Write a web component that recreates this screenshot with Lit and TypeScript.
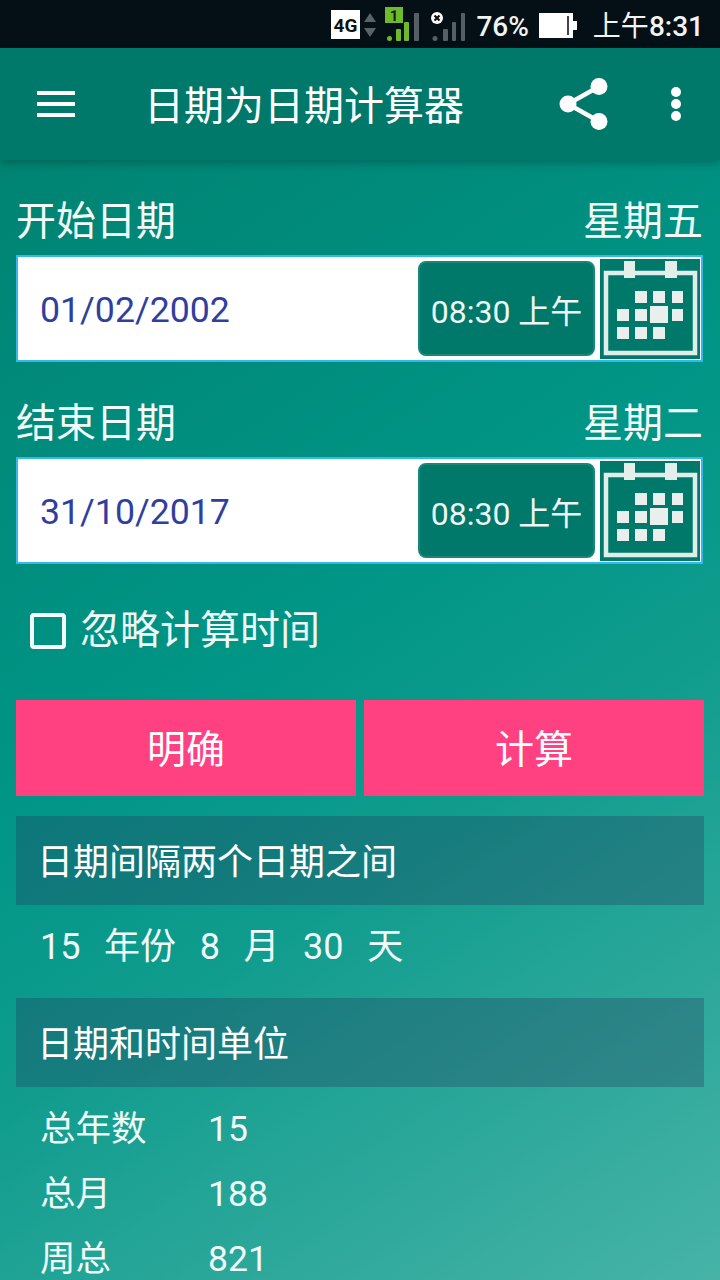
import { LitElement, html, css, svg } from "lit";
import { customElement } from "lit/decorators.js";

const calendar = svg`<svg class="cal" viewBox="0 0 100 100" width="100" height="100">
  <rect width="100" height="100" fill="#00796b"/>
  <rect x="6" y="14" width="89" height="80" fill="none" stroke="#dfeeea" stroke-width="4.5"/>
  <rect x="24" y="2" width="11" height="17" fill="#e4efec"/>
  <rect x="65" y="2" width="12" height="17" fill="#e4efec"/>
  <g fill="#e8efed">
    <rect x="35" y="32" width="12" height="12"/><rect x="53" y="32" width="12" height="12"/><rect x="72" y="32" width="11" height="12"/>
    <rect x="17" y="50" width="12" height="12"/><rect x="35" y="50" width="12" height="12"/><rect x="50" y="47" width="18" height="17"/><rect x="72" y="50" width="11" height="12"/>
    <rect x="17" y="68" width="12" height="12"/><rect x="35" y="68" width="12" height="12"/><rect x="53" y="68" width="12" height="12"/>
  </g>
</svg>`;

@customElement("app-root")
export class AppRoot extends LitElement {
  static styles = css`
    :host {
      display: block; width: 720px; height: 1280px; overflow: hidden; color: #fff;
      font-family: Roboto, "Noto Sans CJK SC", sans-serif;
    }
    .status {
      height: 48px; background: #040f16; display: flex; align-items: center;
      justify-content: flex-end; padding: 5px 16px 0 0; box-sizing: border-box; color: #f2f4f4;
    }
    .status svg { display: block; }
    .lte { margin: -4px 6px 0 0; }
    .sim1 { margin: -5px 12px 0 0; }
    .sim2 { margin: -5px 11px 0 0; }
    .pct { font-size: 28px; font-weight: 500; margin-right: 10px; line-height: 43px; }
    .batt { margin: -2px 16px 0 0; }
    .clock { font-size: 28px; font-weight: 500; line-height: 43px; }
    .clock .cjk { font-weight: 400; }
    .main {
      height: 1232px;
      background: linear-gradient(147deg, #00806f 0%, #009586 45%, #0f9c8d 62%, #47b3a7 100%);
    }
    .bar {
      height: 112px; background: #00796b; display: flex; align-items: center;
      box-shadow: 0 3px 8px rgba(0,50,40,.35); position: relative; box-sizing: border-box;
    }
    .menu { margin-left: 37px; margin-right: 69px; }
    .title { font-size: 40px; flex: 1; line-height: 104px; padding-top: 6px; }
    .share { margin-right: 61px; }
    .more { margin-right: 38px; }
    .content { padding: 38px 16px 0; }
    .label-row {
      display: flex; justify-content: space-between; width: 687px;
      font-size: 40px; line-height: 48px; height: 48px; color: #f2fbf9;
    }
    .label-row.second { margin-top: 38px; }
    .field {
      margin-top: 9px; width: 687px; height: 107px; box-sizing: border-box; background: #fff;
      border: 2px solid #35b8ec; display: flex; align-items: center; position: relative;
    }
    .date { color: #303f9f; font-size: 35.7px; margin-left: 22px; flex: 1; padding-top: 3px; }
    .time {
      width: 177px; height: 95px; box-sizing: border-box; background: #00796b;
      border: 2px solid #1a8678; border-radius: 8px; color: #eef7f5; font-size: 32px;
      display: flex; align-items: center; justify-content: center; margin-right: 5px; padding-top: 1px;
    }
    .cal { display: block; margin-right: 1px; }
    .check { display: flex; align-items: center; margin-top: 43px; padding-left: 14px; height: 48px; }
    .box { width: 36px; height: 36px; box-sizing: border-box; border: 4px solid #f4fbfa; border-radius: 4px; margin-right: 14px; }
    .check span { font-size: 40px; color: #eef8f6; line-height: 48px; }
    .buttons { display: flex; gap: 8px; margin-top: 45px; width: 688px; }
    .btn {
      flex: 1; height: 96px; box-sizing: border-box; padding-bottom: 4px; background: #ff4081;
      display: flex; align-items: center; justify-content: center; font-size: 39px;
    }
    .head {
      width: 688px; height: 89px; background: rgba(40, 50, 90, .3); display: flex; align-items: center;
      box-sizing: border-box; padding: 0 21px 4px; font-size: 36px;
    }
    .head.one { margin-top: 20px; }
    .result {
      height: 93px; display: flex; align-items: baseline; padding: 20px 0 0 24px; font-size: 36px;
      line-height: 45px; color: #f0faf8; box-sizing: border-box;
    }
    .result span { margin-right: 23.6px; white-space: nowrap; }
    .row {
      height: 65px; box-sizing: border-box; display: flex; align-items: baseline; padding: 20px 0 0 24px;
      font-size: 35.5px; line-height: 45px; color: #f0faf8;
    }
    .row .k { width: 168px; }
  `;

  private date(d: string) {
    return html`<div class="field">
      <div class="date">${d}</div>
      <div class="time">08:30 上午</div>
      ${calendar}
    </div>`;
  }

  render() {
    return html`
      <div class="status">
        <svg class="lte" width="48" height="29" viewBox="0 0 48 29">
          <rect x="0" y="0" width="29" height="29" fill="#fff"/>
          <text x="14.5" y="22" text-anchor="middle" font-family="Roboto" font-weight="700" font-size="19" fill="#111">4G</text>
          <path d="M39 3l6 9H33zM39 27l-6-9h12z" fill="#59636a"/>
        </svg>
        <svg class="sim1" width="34" height="34" viewBox="0 0 34 34">
          <rect x="0" y="0" width="18" height="16" fill="#6fb92c"/>
          <text x="9" y="14" text-anchor="middle" font-family="Roboto" font-weight="700" font-size="15" fill="#10220a">1</text>
          <circle cx="4.5" cy="31.5" r="2.5" fill="#6fb92c"/>
          <rect x="11" y="22" width="5" height="12" rx="1" fill="#6fb92c"/>
          <rect x="19" y="15" width="5" height="19" rx="1" fill="#6fb92c"/>
          <rect x="29" y="6" width="5" height="28" rx="1" fill="#555f65"/>
        </svg>
        <svg class="sim2" width="34" height="34" viewBox="0 0 34 34">
          <circle cx="6" cy="11" r="6" fill="#fff"/>
          <path d="M3.5 8.5l5 5M8.5 8.5l-5 5" stroke="#111" stroke-width="2.2"/>
          <circle cx="4" cy="31.5" r="2.5" fill="#555f65"/>
          <rect x="12" y="22" width="5" height="12" rx="1" fill="#555f65"/>
          <rect x="21" y="15" width="4" height="19" rx="1" fill="#555f65"/>
          <rect x="30" y="6" width="4" height="28" rx="1" fill="#555f65"/>
        </svg>
        <div class="pct">76%</div>
        <svg class="batt" width="38" height="25" viewBox="0 0 38 25">
          <rect x="0" y="0" width="34" height="25" fill="#fff"/>
          <rect x="28" y="3" width="2" height="19" fill="#444"/>
          <rect x="34" y="8" width="4" height="9" fill="#fff"/>
        </svg>
        <div class="clock"><span class="cjk">上午</span>8:31</div>
      </div>
      <div class="main">
        <div class="bar">
          <svg class="menu" width="38" height="26" viewBox="0 0 38 26">
            <path d="M0 0h38v4H0zM0 11h38v4H0zM0 22h38v4H0z" fill="#fff"/>
          </svg>
          <div class="title">日期为日期计算器</div>
          <svg class="share" width="50" height="54" viewBox="0 0 50 54">
            <path d="M41 9L9 27l32 18" fill="none" stroke="#fff" stroke-width="4.5"/>
            <circle cx="40" cy="9.5" r="8.5" fill="#fff"/>
            <circle cx="9" cy="27" r="8.5" fill="#fff"/>
            <circle cx="40" cy="44.5" r="8.5" fill="#fff"/>
          </svg>
          <svg class="more" width="12" height="36" viewBox="0 0 12 36">
            <circle cx="6" cy="6" r="5" fill="#fff"/>
            <circle cx="6" cy="18" r="5" fill="#fff"/>
            <circle cx="6" cy="30" r="5" fill="#fff"/>
          </svg>
        </div>
        <div class="content">
          <div class="label-row"><span>开始日期</span><span>星期五</span></div>
          ${this.date("01/02/2002")}
          <div class="label-row second"><span>结束日期</span><span>星期二</span></div>
          ${this.date("31/10/2017")}
          <div class="check"><div class="box"></div><span>忽略计算时间</span></div>
          <div class="buttons"><div class="btn">明确</div><div class="btn">计算</div></div>
          <div class="head one">日期间隔两个日期之间</div>
          <div class="result"><span>15</span><span>年份</span><span>8</span><span>月</span><span>30</span><span>天</span></div>
          <div class="head">日期和时间单位</div>
          <div class="row"><div class="k">总年数</div><div>15</div></div>
          <div class="row"><div class="k">总月</div><div>188</div></div>
          <div class="row"><div class="k">周总</div><div>821</div></div>
        </div>
      </div>
    `;
  }
}
